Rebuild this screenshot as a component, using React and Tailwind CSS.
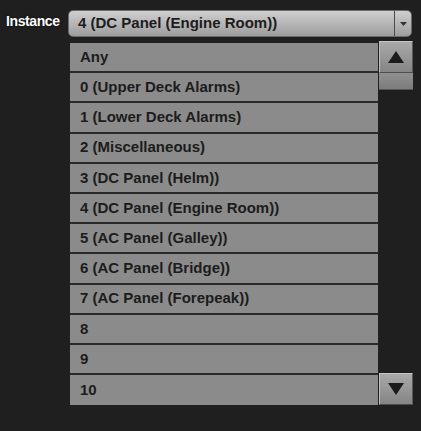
import React from 'react';

const options = [
    'Any',
    '0 (Upper Deck Alarms)',
    '1 (Lower Deck Alarms)',
    '2 (Miscellaneous)',
    '3 (DC Panel (Helm))',
    '4 (DC Panel (Engine Room))',
    '5 (AC Panel (Galley))',
    '6 (AC Panel (Bridge))',
    '7 (AC Panel (Forepeak))',
    '8',
    '9',
    '10',
];

const ScrollButton = ({ dir }) => (
    <div className="h-[32px] w-full flex items-center justify-center bg-gradient-to-b from-[#a9a9a9] to-[#858585] border border-t-[#c4c4c4] border-l-[#bdbdbd] border-r-[#5a5a5a] border-b-[#4e4e4e]">
        <svg width="18" height="14" viewBox="0 0 18 14">
            {dir === 'up' ? (
                <polygon points="9,1 17,13 1,13" fill="#1b1b1b" />
            ) : (
                <polygon points="1,1 17,1 9,13" fill="#1b1b1b" />
            )}
        </svg>
    </div>
);

const App = () => {
    return (
        <div className="w-[421px] h-[431px] bg-[#1f1f1f] overflow-hidden" style={{ fontFamily: '"Liberation Sans", Arial, sans-serif' }}>
            <div className="flex items-start pt-[10px] pl-[6px]">
                <span className="w-[62px] text-[14px] font-bold text-white leading-[22px] tracking-[-0.4px] [text-shadow:0_0_2px_#000]">Instance</span>
                <div className="flex h-[27px] w-[344px] rounded-[5px] bg-gradient-to-b from-[#cfcfcf] to-[#9d9d9d] border border-[#6a6a6a] overflow-hidden">
                    <div className="flex-1 flex items-center pl-[9px] text-[15px] font-bold text-[#1c1c1c]">
                        4 (DC Panel (Engine Room))
                    </div>
                    <div className="w-[17px] border-l border-[#4a4a4a] flex items-center justify-center">
                        <svg width="7" height="4" viewBox="0 0 7 4">
                            <polygon points="0,0 7,0 3.5,4" fill="#333" />
                        </svg>
                    </div>
                </div>
            </div>
            <div className="flex mt-[6px] ml-[70px]">
                <div className="w-[308px] flex flex-col">
                    {options.map((opt, i) => (
                        <div
                            key={opt}
                            className={`h-[30.2px] flex items-center pl-[10px] bg-[#8b8b8b] text-[15px] font-bold text-[#1c1c1c] ${i < options.length - 1 ? 'border-b-2 border-[#2a2a2a]' : ''}`}
                        >
                            {opt}
                        </div>
                    ))}
                </div>
                <div className="w-[34px] ml-[1px] flex flex-col -mt-[2px]">
                    <ScrollButton dir="up" />
                    <div className="h-[17px] bg-gradient-to-b from-[#909090] to-[#7c7c7c] border-b border-[#555]" />
                    <div className="flex-1" />
                    <ScrollButton dir="down" />
                </div>
            </div>
        </div>
    );
};

export default App;
